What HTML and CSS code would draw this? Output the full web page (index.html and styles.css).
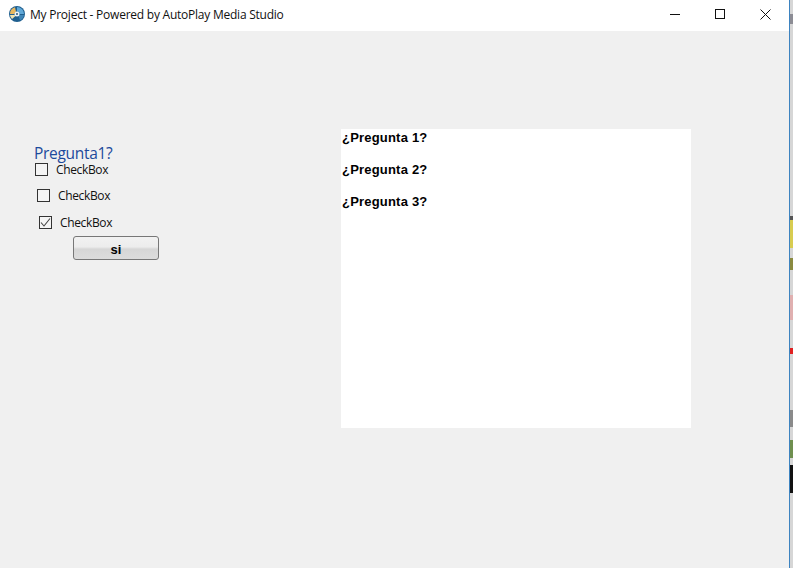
FILE: index.html
```html
<!DOCTYPE html>
<html lang="es">
<head>
<meta charset="utf-8">
<title>My Project - Powered by AutoPlay Media Studio</title>
<link rel="stylesheet" href="styles.css">
</head>
<body>
<div class="screen">
  <div class="window">
    <header class="titlebar">
      <svg class="app-icon" width="16" height="16" viewBox="0 0 16 16">
        <circle cx="8" cy="8" r="8" fill="#1f5f8f"/>
        <path d="M8 1A7 7 0 0 1 15 8H10.500A2.500 2.500 0 0 0 8 5.500Z" fill="#5fa8d8"/>
        <path d="M1 8A7 7 0 0 1 6 1.300L7 5.700A2.500 2.500 0 0 0 5.500 8Z" fill="#e8b860"/>
        <path d="M3 13A7 7 0 0 1 1 9H5.600A2.500 2.500 0 0 0 6.500 10Z" fill="#f0e2b0"/>
        <path d="M9.500 10A2.500 2.500 0 0 0 10.500 9H15A7 7 0 0 1 11 14.300Z" fill="#3f86b8"/>
        <circle cx="8" cy="8" r="2.500" fill="#eef4f8"/>
        <circle cx="8" cy="8" r="1" fill="#2c5878"/>
      </svg>
      <span class="title">My Project - Powered by AutoPlay Media Studio</span>
      <div class="controls">
        <svg class="ctl ctl-min" width="10" height="10" viewBox="0 0 10 10"><path d="M0 5.500H10" stroke="#111" fill="none"/></svg>
        <svg class="ctl ctl-max" width="10" height="10" viewBox="0 0 10 10"><rect x=".5" y=".5" width="9" height="9" stroke="#111" fill="none"/></svg>
        <svg class="ctl ctl-close" width="11" height="11" viewBox="0 0 11 11"><path d="M.5 .5L10.500 10.500M10.500 .5L.5 10.500" stroke="#111" fill="none"/></svg>
      </div>
    </header>
    <main class="client">
      <section class="form">
        <h1 class="question">Pregunta1?</h1>
        <label class="check check-a"><span class="box"></span><span class="check-text">CheckBox</span></label>
        <label class="check check-b"><span class="box"></span><span class="check-text">CheckBox</span></label>
        <label class="check check-c"><span class="box">
          <svg width="11" height="11" viewBox="0 0 11 11"><path d="M1 5.500L4 9L10 1.500" stroke="#444" stroke-width="1.100" fill="none"/></svg>
        </span><span class="check-text">CheckBox</span></label>
        <button class="btn" type="button">si</button>
      </section>
      <section class="panel">
        <p>¿Pregunta 1?</p>
        <p>¿Pregunta 2?</p>
        <p>¿Pregunta 3?</p>
      </section>
    </main>
  </div>
  <div class="edge">
    <i class="e1"></i><i class="e2"></i><i class="e3"></i><i class="e4"></i><i class="e5"></i><i class="e6"></i><i class="e7"></i><i class="e8"></i><i class="e9"></i>
  </div>
</div>
</body>
</html>
```
FILE: styles.css
```css
html, body { margin: 0; padding: 0; }
body { width: 793px; height: 568px; overflow: hidden; background: #f0f0f0; }
.screen { display: flex; width: 793px; height: 568px; }
.window {
  width: 789px;
  height: 568px;
  display: flex;
  flex-direction: column;
  background: #f0f0f0;
  border-right: 1px solid #3d83c0;
}
.titlebar {
  height: 31px;
  flex: none;
  background: #fff;
  display: flex;
  align-items: center;
  padding-left: 9px;
}
.app-icon { flex: none; margin-top: -3px; }
.title {
  margin-left: 5px;
  margin-top: -2px;
  font: 12px "Open Sans", "Noto Sans", sans-serif;
  color: #111;
  letter-spacing: -.235px;
}
.controls { margin-left: auto; display: flex; align-items: center; margin-top: -3px; }
.ctl { flex: none; display: block; }
.ctl-min { margin-right: 35px; }
.ctl-max { margin-right: 35px; }
.ctl-close { margin-right: 18px; }
.client { flex: 1; display: flex; align-items: flex-start; padding-top: 98px; }
.form { width: 341px; flex: none; display: flex; flex-direction: column; align-items: flex-start; padding-top: 16px; }
.question {
  margin: 0 0 0 34px;
  font: 400 15.500px/17px "Open Sans", "Noto Sans", sans-serif;
  color: #1c4a9c;
  letter-spacing: -.3px;
}
.check {
  display: flex;
  align-items: center;
  font: 12px/14px "Open Sans", "Noto Sans", sans-serif;
  color: #111;
  letter-spacing: -.35px;
}
.check-text { padding-top: 1px; margin-bottom: -1px; }
.check-a { margin: 0 0 0 35px; }
.check-b { margin: 12px 0 0 37px; }
.check-c { margin: 13px 0 0 39px; }
.box {
  width: 11px;
  height: 11px;
  border: 1px solid #333;
  background: #f4f4f4;
  margin-right: 8px;
  display: flex;
}
.btn {
  margin: 7px 0 0 73px;
  width: 86px;
  height: 24px;
  padding: 2px 0 0;
  border: 1px solid #777;
  border-radius: 3px;
  background: linear-gradient(#f2f2f2 0, #ececec 45%, #d6d6d6 55%, #dcdcdc 100%);
  font: 700 13px "Liberation Sans", Arial, sans-serif;
  color: #000;
}
.panel {
  width: 350px;
  height: 299px;
  flex: none;
  background: #fff;
  font: 700 13px/16px "Liberation Sans", Arial, sans-serif;
  letter-spacing: .2px;
  color: #000;
  padding: 1px 0 0 1px;
  box-sizing: border-box;
}
.panel p { margin: 0 0 16px; }
.edge { flex: 1; background: #d6d6d6; display: flex; flex-direction: column; }
.edge i { display: block; flex: none; }
.e1 { height: 10px; margin-top: 14px; background: #8c8c94; }
.e2 { height: 4px; margin-top: 192px; background: #555; }
.e3 { height: 28px; background: #d8cc50; }
.e4 { height: 12px; margin-top: 10px; background: #8a8a40; }
.e5 { height: 25px; margin-top: 25px; background: #e0b0b0; }
.e6 { height: 6px; margin-top: 28px; background: #e02020; }
.e7 { height: 17px; margin-top: 56px; background: #8a8a8a; }
.e8 { height: 18px; margin-top: 13px; background: #6f8f4f; }
.e9 { height: 28px; margin-top: 7px; background: #111; }
```
